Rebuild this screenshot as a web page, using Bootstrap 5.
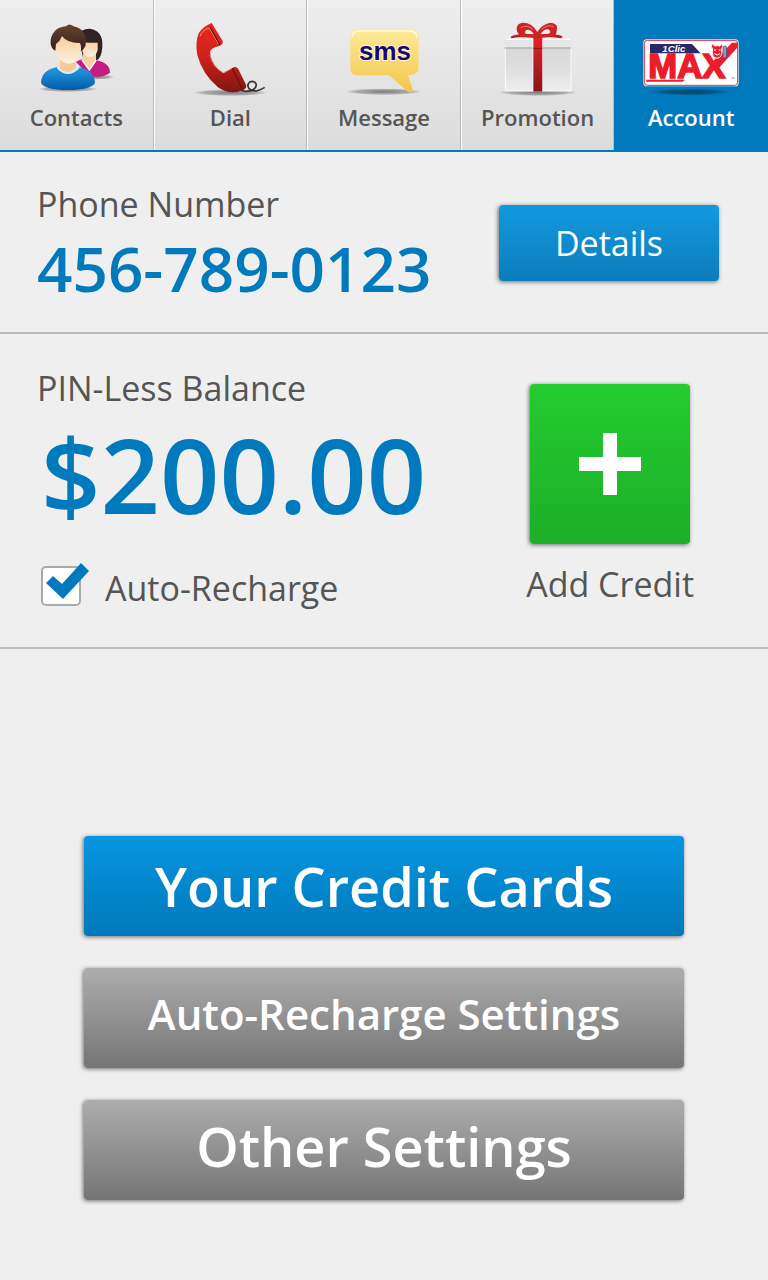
<!DOCTYPE html>
<html lang="en">
<head>
<meta charset="utf-8">
<meta name="viewport" content="width=device-width, initial-scale=1">
<title>Account</title>
<link href="https://cdn.jsdelivr.net/npm/bootstrap@5.3.0/dist/css/bootstrap.min.css" rel="stylesheet">
<style>
  :root { --brand: #007abc; --ink: #555; }
  body { background: #efefef; color: var(--ink); font-family: "Trebuchet MS", "Open Sans", "Noto Sans", sans-serif; }
  .tabbar { border-bottom: 2px solid var(--brand); background: linear-gradient(#eee, #dcdcdc); }
  .tabbar .nav-link { height: 150px; padding: 22px 0 0; border-radius: 0; color: var(--ink); font-size: 22px; font-weight: 600; line-height: 38px; border-left: 1px solid #fff; border-right: 1px solid #bbb; }
  .tabbar .nav-item:first-child .nav-link { border-left: 0; }
  .tabbar .nav-link.active { background: var(--brand); color: #fff; border-color: var(--brand); }
  .tabbar svg { width: 100px; height: 76px; }
  .panel-row { border-bottom: 2px solid #b9b9b9; padding-left: 37px; }
  .phone-row { padding-top: 30px; padding-bottom: 28px; padding-right: 49px; }
  .balance-row { padding-top: 32px; padding-bottom: 37px; padding-right: 74px; }
  .caption-text { font-size: 34px; line-height: 44px; }
  .phone-value { font-size: 62px; line-height: 72px; font-weight: 600; color: var(--brand); margin-top: 6px; }
  .balance-value { font-size: 104px; line-height: 128px; font-weight: 600; color: var(--brand); }
  .btn { --bs-btn-border-width: 0; --bs-btn-border-radius: 4px; color: #fff; box-shadow: -1px 1px 4px rgba(0,0,0,.55); }
  .btn:hover { color: #fff; }
  .btn-details { width: 220px; height: 76px; font-size: 34px; background: linear-gradient(#1499de, #0c7dbc); }
  .credit-box { padding-top: 18px; gap: 18px; }
  .btn-plus { width: 160px; height: 160px; background: linear-gradient(#24cc30, #1cae28); }
  .btn-wide { height: 100px; font-weight: 600; font-size: 54px; line-height: 60px; padding: 0 0 8px; background: linear-gradient(#adadad, #757575); }
  .btn-blue { padding: 0; background: linear-gradient(#0795e0, #0079bb); }
  .btn-longer { font-size: 42px; }
  .actions { width: 78.125%; gap: 32px; margin-bottom: 80px; }
  .tick { width: 40px; height: 40px; }
  .tick input { appearance: none; width: 40px; height: 40px; margin: 0; background: #fff; border: 2px solid #aaa; border-radius: 5px; }
  .tick svg { position: absolute; left: 0; bottom: 0; pointer-events: none; visibility: hidden; }
  .tick input:checked + svg { visibility: visible; }
</style>
</head>
<body class="d-flex flex-column min-vh-100">
<header class="tabbar">
  <ul class="nav row row-cols-5 g-0 text-center">
    <li class="nav-item col"><a class="nav-link d-flex flex-column align-items-center" href="#contacts">
      <svg viewBox="78 66 300 228" aria-hidden="true">
        <defs>
          <linearGradient id="hair" x2="0" y2="1"><stop stop-color="#67432d"/><stop offset="1" stop-color="#35201a"/></linearGradient>
          <linearGradient id="skin" x2="0" y2="1"><stop stop-color="#f9cf9d"/><stop offset="1" stop-color="#fff2e3"/></linearGradient>
          <linearGradient id="shirt" x2="0" y2="1"><stop stop-color="#249ce0"/><stop offset="1" stop-color="#005ca8"/></linearGradient>
          <radialGradient id="shade"><stop stop-color="#000" stop-opacity=".45"/><stop offset=".7" stop-color="#000" stop-opacity=".25"/><stop offset="1" stop-color="#000" stop-opacity="0"/></radialGradient>
        </defs>
        <ellipse cx="285" cy="231" rx="58" ry="8" fill="url(#shade)"/>
        <ellipse cx="203" cy="267" rx="90" ry="9" fill="url(#shade)"/>
        <path d="M235 105Q245 85 270 86Q310 92 307 140Q305 175 288 182L250 178Z" fill="#332322"/>
        <path d="M228 186Q245 176 250 180L289 180Q330 190 330 218Q312 233 270 230Z" fill="#c81a83"/>
        <path d="M250 160h38v22l-20 28-22-30Z" fill="#f6cfa5"/>
        <path d="M246 125Q270 130 293 128V150Q288 171 270 171Q250 169 246 150Z" fill="url(#skin)"/>
        <path d="M246 180l22 30 21-30" fill="none" stroke="#fff" stroke-width="4"/>
        <path d="M171 201Q124 210 123 249Q135 270 204 270Q272 270 285 249Q283 210 235 201Z" fill="url(#shirt)"/>
        <path d="M170 204Q203 240 239 204L230 193H180Z" fill="#d7effb"/>
        <path d="M180 175h48v29Q204 228 180 206Z" fill="#f7cb98"/>
        <path d="M167 120Q200 105 242 123V150Q237 191 204 191Q170 183 166 147Z" fill="url(#skin)"/>
        <path d="M166 153Q150 144 152 119Q160 82 198 79Q207 68 221 79Q262 87 257 135Q252 150 242 154Q247 136 239 129Q203 130 186 109Q180 124 168 132Z" fill="url(#hair)"/>
      </svg>
      <span>Contacts</span></a></li>
    <li class="nav-item col"><a class="nav-link d-flex flex-column align-items-center" href="#dial">
      <svg viewBox="75 66 300 228" aria-hidden="true">
        <defs><linearGradient id="phone" x2="0" y2="1"><stop stop-color="#e8281e"/><stop offset=".5" stop-color="#cd211b"/><stop offset="1" stop-color="#7f1613"/></linearGradient></defs>
        <ellipse cx="226" cy="278" rx="112" ry="10" fill="url(#shade)"/>
        <path d="M256 270Q272 277 288 272Q307 264 303 251Q296 240 284 246Q274 256 283 267Q300 280 329 262" fill="none" stroke="#38322f" stroke-width="5"/>
        <path d="M170 69L203 123Q205 133 195 137Q165 144 165 157Q168 195 205 219L233 203Q244 198 250 208L273 254Q276 264 266 269Q225 288 189 262Q142 222 127 165Q120 128 131 100Q143 80 170 69Z" fill="url(#phone)"/>
        <path d="M136 108Q140 91 163 84L191 133M165 163Q170 199 205 219L231 205" fill="none" stroke="#f58b72" stroke-width="3"/>
        <path d="M165 81l30 54M232 205l29 61" stroke="#6d100e" stroke-width="4"/>
      </svg>
      <span>Dial</span></a></li>
    <li class="nav-item col"><a class="nav-link d-flex flex-column align-items-center" href="#message">
      <svg viewBox="81 66 300 228" aria-hidden="true">
        <defs><linearGradient id="bubble" x2="0" y2="1"><stop stop-color="#fdeb9b"/><stop offset="1" stop-color="#f3c54b"/></linearGradient></defs>
        <ellipse cx="230" cy="275" rx="115" ry="10" fill="url(#shade)"/>
        <path d="M153 86H312Q335 86 335 108V203Q335 225 303 226L317 269Q314 281 303 275L246 226H153Q130 226 130 203V108Q130 86 153 86Z" fill="url(#bubble)"/>
        <path d="M135 112Q136 93 155 93H310Q329 94 330 112" fill="none" stroke="#fffbe4" stroke-width="4"/>
        <text x="234" y="180" text-anchor="middle" font-family="Liberation Sans, sans-serif" font-weight="700" font-size="78" fill="#160772" stroke="#fff7cd" stroke-width="6" paint-order="stroke">sms</text>
      </svg>
      <span>Message</span></a></li>
    <li class="nav-item col"><a class="nav-link d-flex flex-column align-items-center" href="#promotion">
      <svg viewBox="83 66 300 228" aria-hidden="true">
        <defs>
          <linearGradient id="box" x2="0" y2="1"><stop stop-color="#d7d7d7"/><stop offset=".5" stop-color="#dedede"/><stop offset="1" stop-color="#eee"/></linearGradient>
          <linearGradient id="ribbon" x2="0" y2="1"><stop stop-color="#e22428"/><stop offset="1" stop-color="#86171a"/></linearGradient>
        </defs>
        <ellipse cx="232" cy="277" rx="118" ry="11" fill="url(#shade)"/>
        <path d="M135 140H332V273H135Z" fill="url(#box)" stroke="#fafafa" stroke-width="3"/>
        <rect x="130" y="116" width="205" height="28" rx="6" fill="#e6e6e6"/>
        <path d="M133 144H332" stroke="#b5b5b5" stroke-width="4"/>
        <path d="M136 118H330" stroke="#fff" stroke-width="4"/>
        <path d="M217 112h31v163h-31Z" fill="#fff"/>
        <path d="M219 112h27v163h-27Z" fill="url(#ribbon)"/>
        <path d="M219 146h27" stroke="#8c1a1c" stroke-width="3"/>
        <path d="M151 110Q167 99 225 103L235 103Q291 99 308 110L301 115Q260 107 231 115Q190 107 153 115Z" fill="#b91d20"/>
        <path d="M231 96Q215 67 186 68Q168 71 169 88Q170 101 182 111L225 113H240L282 110Q293 96 289 76Q274 60 250 76Q238 84 231 96ZM222 104Q204 106 194 100Q193 89 203 89Q214 91 222 104ZM241 103Q248 90 260 88Q273 90 268 100Q256 106 241 103Z" fill="#cb2526" fill-rule="evenodd"/>
        <path d="M181 83Q198 72 219 89M244 88Q262 71 281 81" fill="none" stroke="#f17870" stroke-width="3"/>
      </svg>
      <span>Promotion</span></a></li>
    <li class="nav-item col"><a class="nav-link active d-flex flex-column align-items-center" href="#account" aria-current="page">
      <svg viewBox="88 66 300 228" aria-hidden="true">
        <ellipse cx="238" cy="276" rx="122" ry="10" fill="url(#shade)"/>
        <rect x="95" y="118" width="286" height="141" rx="11" fill="#fff"/>
        <rect x="98" y="121" width="280" height="135" rx="9" fill="none" stroke="#ed2a30" stroke-width="3"/>
        <path d="M115 132H241L267 160H115Z" fill="#282965"/>
        <text x="152" y="156" font-family="Liberation Sans, sans-serif" font-style="italic" font-weight="700" font-size="29" fill="#fff">1Clic</text>
        <text x="110" y="235" font-family="Liberation Sans, sans-serif" font-weight="700" font-size="104" fill="#ed1c2b" stroke="#ed1c2b" stroke-width="5">MAX</text>
        <path d="M104 239H220L213 245H104ZM296 196L361 128H378V142L318 208Z" fill="#ed1c2b"/>
        <path d="M301 131l9 7q9-3 14 0l8-7q4 10-2 15q4 27-14 29q-18-2-13-29q-8-7-2-15Z" fill="#ed1c2b" stroke="#fff" stroke-width="3"/>
        <path d="M307 150h6m8 0h6M308 161q9 8 17 0" stroke="#fff" stroke-width="3" fill="none"/>
        <rect x="334" y="138" width="11" height="36" rx="5" fill="#8d9bc4" stroke="#303b79" stroke-width="2"/>
        <path d="M360 234h9" stroke="#555" stroke-width="2"/>
      </svg>
      <span>Account</span></a></li>
  </ul>
</header>

<main class="d-flex flex-column flex-grow-1">
  <section class="panel-row phone-row d-flex justify-content-between">
    <div>
      <div class="caption-text">Phone Number</div>
      <div class="phone-value">456-789-0123</div>
    </div>
    <button type="button" class="btn btn-details align-self-center">Details</button>
  </section>

  <section class="panel-row balance-row d-flex justify-content-between">
    <div>
      <div class="caption-text">PIN-Less Balance</div>
      <div class="balance-value ps-1">$200.00</div>
      <div class="d-flex align-items-center mt-4 ps-1">
        <div class="tick position-relative">
          <input type="checkbox" id="auto" class="d-block" checked>
          <svg width="50" height="44" viewBox="0 0 50 44" aria-hidden="true"><path d="M5 21L12 14L21 22L40 1L48 9L22 37Z" fill="#007abc"/></svg>
        </div>
        <label for="auto" class="caption-text ps-4 pt-1">Auto-Recharge</label>
      </div>
    </div>
    <div class="credit-box d-flex flex-column align-items-center">
      <button type="button" class="btn btn-plus p-0" aria-labelledby="add-credit">
        <svg width="62" height="62" viewBox="0 0 62 62" aria-hidden="true"><path d="M24 0h14v24h24v14H38v24H24V38H0V24h24Z" fill="#fff"/></svg>
      </button>
      <span id="add-credit" class="caption-text">Add Credit</span>
    </div>
  </section>

  <div class="actions d-grid mx-auto mt-auto">
    <button type="button" class="btn btn-wide btn-blue">Your Credit Cards</button>
    <button type="button" class="btn btn-wide btn-longer">Auto-Recharge Settings</button>
    <button type="button" class="btn btn-wide">Other Settings</button>
  </div>
</main>
<script src="https://cdn.jsdelivr.net/npm/bootstrap@5.3.0/dist/js/bootstrap.bundle.min.js"></script>
</body>
</html>
